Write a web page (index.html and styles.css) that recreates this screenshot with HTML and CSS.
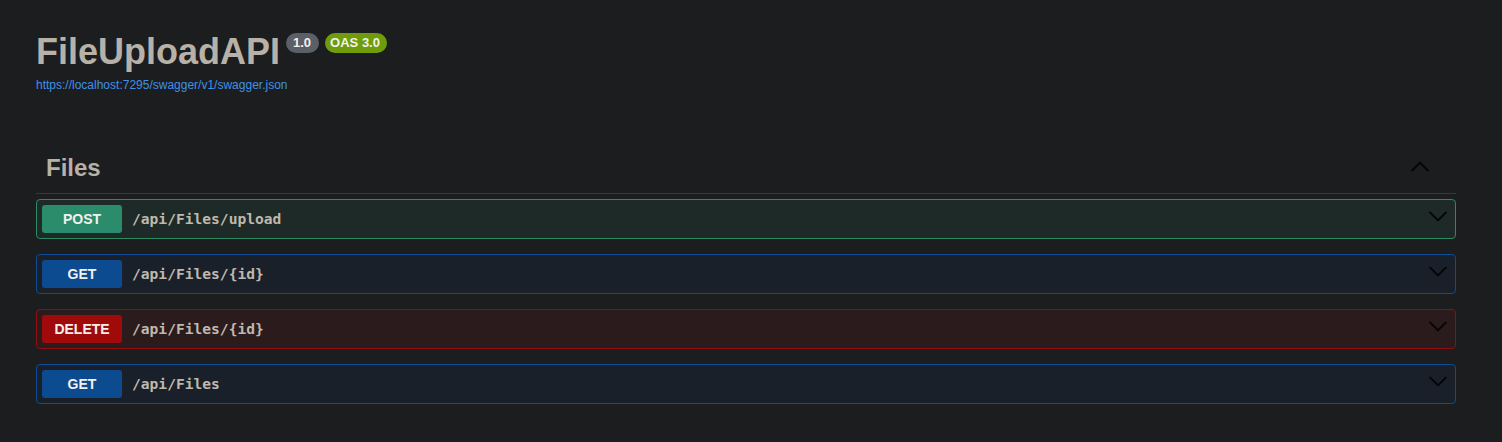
FILE: index.html
```html
<!DOCTYPE html>
<html>
<head>
<meta charset="utf-8">
<link rel="stylesheet" href="styles.css">
</head>
<body>
<div class="wrapper">
  <div class="info">
    <div class="title-row">
      <h2 class="title">FileUploadAPI</h2>
      <span class="badge version">1.0</span>
      <span class="badge oas">OAS 3.0</span>
    </div>
    <a class="link" href="#">https://localhost:7295/swagger/v1/swagger.json</a>
  </div>

  <div class="tag">
    <h3 class="tag-name">Files</h3>
    <svg class="tag-arrow" width="20" height="20" viewBox="0 0 20 20"><path d="M17.418 14.908c.272.268.709.268.979 0s.271-.701 0-.969l-7.908-7.83c-.27-.268-.707-.268-.979 0l-7.908 7.83c-.27.268-.27.701 0 .969.271.268.709.268.979 0L10 7.779l7.418 7.129z"/></svg>
  </div>

  <div class="opblock post">
    <span class="method">POST</span>
    <span class="path">/api/Files/upload</span>
    <svg class="arrow" width="20" height="20" viewBox="0 0 20 20"><path d="M17.418 6.109c.272-.268.709-.268.979 0s.271.701 0 .969l-7.908 7.83c-.27.268-.707.268-.979 0l-7.908-7.83c-.27-.268-.27-.701 0-.969.271-.268.709-.268.979 0L10 13.25l7.418-7.141z"/></svg>
  </div>
  <div class="opblock get">
    <span class="method">GET</span>
    <span class="path">/api/Files/{id}</span>
    <svg class="arrow" width="20" height="20" viewBox="0 0 20 20"><path d="M17.418 6.109c.272-.268.709-.268.979 0s.271.701 0 .969l-7.908 7.83c-.27.268-.707.268-.979 0l-7.908-7.83c-.27-.268-.27-.701 0-.969.271-.268.709-.268.979 0L10 13.25l7.418-7.141z"/></svg>
  </div>
  <div class="opblock delete">
    <span class="method">DELETE</span>
    <span class="path">/api/Files/{id}</span>
    <svg class="arrow" width="20" height="20" viewBox="0 0 20 20"><path d="M17.418 6.109c.272-.268.709-.268.979 0s.271.701 0 .969l-7.908 7.83c-.27.268-.707.268-.979 0l-7.908-7.83c-.27-.268-.27-.701 0-.969.271-.268.709-.268.979 0L10 13.25l7.418-7.141z"/></svg>
  </div>
  <div class="opblock get">
    <span class="method">GET</span>
    <span class="path">/api/Files</span>
    <svg class="arrow" width="20" height="20" viewBox="0 0 20 20"><path d="M17.418 6.109c.272-.268.709-.268.979 0s.271.701 0 .969l-7.908 7.83c-.27.268-.707.268-.979 0l-7.908-7.83c-.27-.268-.27-.701 0-.969.271-.268.709-.268.979 0L10 13.25l7.418-7.141z"/></svg>
  </div>
</div>
</body>
</html>
```

FILE: styles.css
```css
html, body {
  margin: 0;
  padding: 0;
  background: #1c1d1f;
}
body {
  font-family: "Liberation Sans", Arial, sans-serif;
  color: #b7b1a8;
}
.wrapper {
  padding: 0 46px 0 36px;
}
.info {
  padding-top: 32px;
  height: 111px;
}
.title-row {
  display: flex;
  align-items: flex-start;
}
.title {
  margin: 0;
  font-size: 36px;
  line-height: 40px;
  font-weight: 700;
  color: #b7b1a8;
}
.badge {
  margin-top: 1px;
  height: 20px;
  line-height: 20px;
  border-radius: 57px;
  font-size: 13px;
  font-weight: 700;
  color: #f2f1ee;
  box-sizing: border-box;
}
.version {
  margin-left: 6px;
  padding: 0 8px 0 7px;
  background: #5b5f67;
}
.oas {
  margin-left: 6px;
  padding: 0 7px 0 5px;
  background: #6f9c0b;
}
.link {
  display: block;
  margin-top: 6px;
  font-size: 12px;
  line-height: 14px;
  color: #3f91e8;
  text-decoration: none;
}
.tag {
  display: flex;
  align-items: flex-start;
  padding: 10px 26px 10px 10px;
  border-bottom: 1px solid #37383b;
  margin-bottom: 5px;
}
.tag-name {
  flex: 1;
  margin: 0;
  font-size: 24px;
  line-height: 30px;
  font-weight: 700;
  color: #b7b1a8;
}
.tag-arrow {
  margin-top: 3px;
  fill: #050505;
  stroke: #050505;
  stroke-width: 0.5;
}
.opblock {
  display: flex;
  align-items: flex-start;
  padding: 5px 7px 5px 5px;
  border: 1px solid;
  border-radius: 4px;
  margin-bottom: 15px;
}
.method {
  width: 80px;
  padding: 6px 0;
  line-height: 16px;
  text-align: center;
  border-radius: 3px;
  font-size: 14px;
  font-weight: 700;
  color: #f2f1ee;
}
.path {
  flex: 1;
  padding: 0 10px;
  font-family: "DejaVu Sans Mono", "Liberation Mono", monospace;
  font-size: 14.6px;
  font-weight: 700;
  line-height: 28px;
  color: #bfb8ac;
}
.arrow {
  margin-top: 1px;
  fill: #050505;
  stroke: #050505;
  stroke-width: 0.5;
}
.post {
  background: #1e2a27;
  border-color: #2a8a60;
}
.post .method { background: #2b8c6b; }
.get {
  background: #1a202a;
  border-color: #0d4c97;
}
.get .method { background: #0c4b90; }
.delete {
  background: #2c1b1c;
  border-color: #920e0e;
}
.delete .method { background: #a00a0a; }
```
